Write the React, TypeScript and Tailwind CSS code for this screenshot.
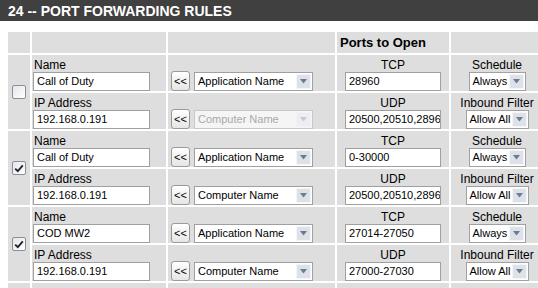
import React from "react";

const F = { fontFamily: '"Liberation Sans", Arial, sans-serif' };

function Arrow({ disabled }: { disabled?: boolean }) {
  return (
    <span
      className={`m-[1px] flex w-[15px] items-center justify-center border ${
        disabled ? "border-[#f2f2f2] bg-[#eceef1]" : "border-[#f4f6f9] bg-[#dde1e8]"
      }`}
    >
      <svg width="7" height="5" viewBox="0 0 7 5">
        <path d="M0 0 H7 L3.5 4.5 Z" fill={disabled ? "#c5cad3" : "#6d7a8f"} />
      </svg>
    </span>
  );
}

function Sel({ text, w, disabled }: { text: string; w: string; disabled?: boolean }) {
  return (
    <div
      className={`flex h-[19px] items-stretch border ${w} ${
        disabled ? "border-[#c8c8c8] bg-[#f5f5f5] text-[#a8a8a8]" : "border-[#a0a0a0] bg-white text-black"
      }`}
    >
      <span className="flex-1 overflow-hidden whitespace-nowrap pl-[3px] text-[11px] leading-[17px]">{text}</span>
      <Arrow disabled={disabled} />
    </div>
  );
}

function Inp({ value, w }: { value: string; w: string }) {
  return (
    <div
      className={`h-[19px] overflow-hidden whitespace-nowrap border border-[#a0a0a0] bg-white pl-[3px] text-[11px] leading-[17px] text-black ${w}`}
    >
      {value}
    </div>
  );
}

function Btn() {
  return (
    <div className="flex h-[20px] w-[19px] items-center justify-center rounded-[3px] border border-[#9a9a9a] bg-gradient-to-b from-white to-[#e6e6e6] text-[11px] leading-none text-black">
      &lt;&lt;
    </div>
  );
}

function Check({ checked }: { checked?: boolean }) {
  return (
    <div className="flex h-[14px] w-[14px] items-center justify-center rounded-[2px] border border-[#8a8f98] bg-gradient-to-br from-[#e4e6ea] to-white">
      {checked && (
        <svg width="10" height="9" viewBox="0 0 10 9">
          <path d="M1.2 4.6 L3.8 7.2 L8.8 1.4" fill="none" stroke="#22262c" strokeWidth="1.9" />
        </svg>
      )}
    </div>
  );
}

const cell = "bg-[#dedede]";

function NameCell({ label, value }: { label: string; value: string }) {
  return (
    <div className={`${cell} flex flex-col justify-end pl-[1px]`}>
      <div className="pl-[1px] text-[12px] leading-[14px]">{label}</div>
      <Inp value={value} w="w-[117px]" />
    </div>
  );
}

function AppCell({ text, disabled }: { text: string; disabled?: boolean }) {
  return (
    <div className={`${cell} flex items-end pb-0 pl-[3px]`}>
      <div className="flex items-end gap-[4px]">
        <Btn />
        <Sel text={text} w="w-[119px]" disabled={disabled} />
      </div>
    </div>
  );
}

function PortCell({ label, value }: { label: string; value: string }) {
  return (
    <div className={`${cell} flex flex-col items-center justify-end`}>
      <div className="text-[12px] leading-[14px]">{label}</div>
      <Inp value={value} w="w-[96px]" />
    </div>
  );
}

function SchedCell({ label, text, w }: { label: string; text: string; w: string }) {
  return (
    <div className={`${cell} flex flex-col items-center justify-end`}>
      <div className="text-[12px] leading-[14px]">{label}</div>
      <Sel text={text} w={w} />
    </div>
  );
}

type Rule = { checked: boolean; name: string; app: string; ip: string; compDisabled: boolean; tcp: string; udp: string };

const rules: Rule[] = [
  { checked: false, name: "Call of Duty", app: "Application Name", ip: "192.168.0.191", compDisabled: true, tcp: "28960", udp: "20500,20510,28960" },
  { checked: true, name: "Call of Duty", app: "Application Name", ip: "192.168.0.191", compDisabled: false, tcp: "0-30000", udp: "20500,20510,28960" },
  { checked: true, name: "COD MW2", app: "Application Name", ip: "192.168.0.191", compDisabled: false, tcp: "27014-27050", udp: "27000-27030" },
];

export default function App() {
  return (
    <div className="h-[288px] w-[538px] overflow-hidden bg-white text-black" style={F}>
      <div className="flex h-[21px] items-center bg-[#404040] pl-[8px] text-[14px] font-bold leading-none text-white">
        24 -- PORT FORWARDING RULES
      </div>
      <div className="ml-[8px] mt-[11px] grid w-[535px] grid-cols-[22px_134px_167px_112px_92px] grid-rows-[21px_repeat(7,36px)] gap-[2px]">
        <div className={cell} />
        <div className={cell} />
        <div className={cell} />
        <div className={`${cell} flex items-center pl-[3px] text-[13px] font-bold`}>Ports to Open</div>
        <div className={cell} />
        {rules.map((r, i) => (
          <React.Fragment key={i}>
            <div className={`${cell} row-span-2 flex items-center justify-center`}>
              <Check checked={r.checked} />
            </div>
            <NameCell label="Name" value={r.name} />
            <AppCell text={r.app} />
            <PortCell label="TCP" value={r.tcp} />
            <SchedCell label="Schedule" text="Always" w="w-[57px]" />
            <NameCell label="IP Address" value={r.ip} />
            <AppCell text="Computer Name" disabled={r.compDisabled} />
            <PortCell label="UDP" value={r.udp} />
            <SchedCell label="Inbound Filter" text="Allow All" w="w-[63px]" />
          </React.Fragment>
        ))}
        <div className={cell} />
        <div className={cell} />
        <div className={cell} />
        <div className={cell} />
        <div className={cell} />
      </div>
    </div>
  );
}
